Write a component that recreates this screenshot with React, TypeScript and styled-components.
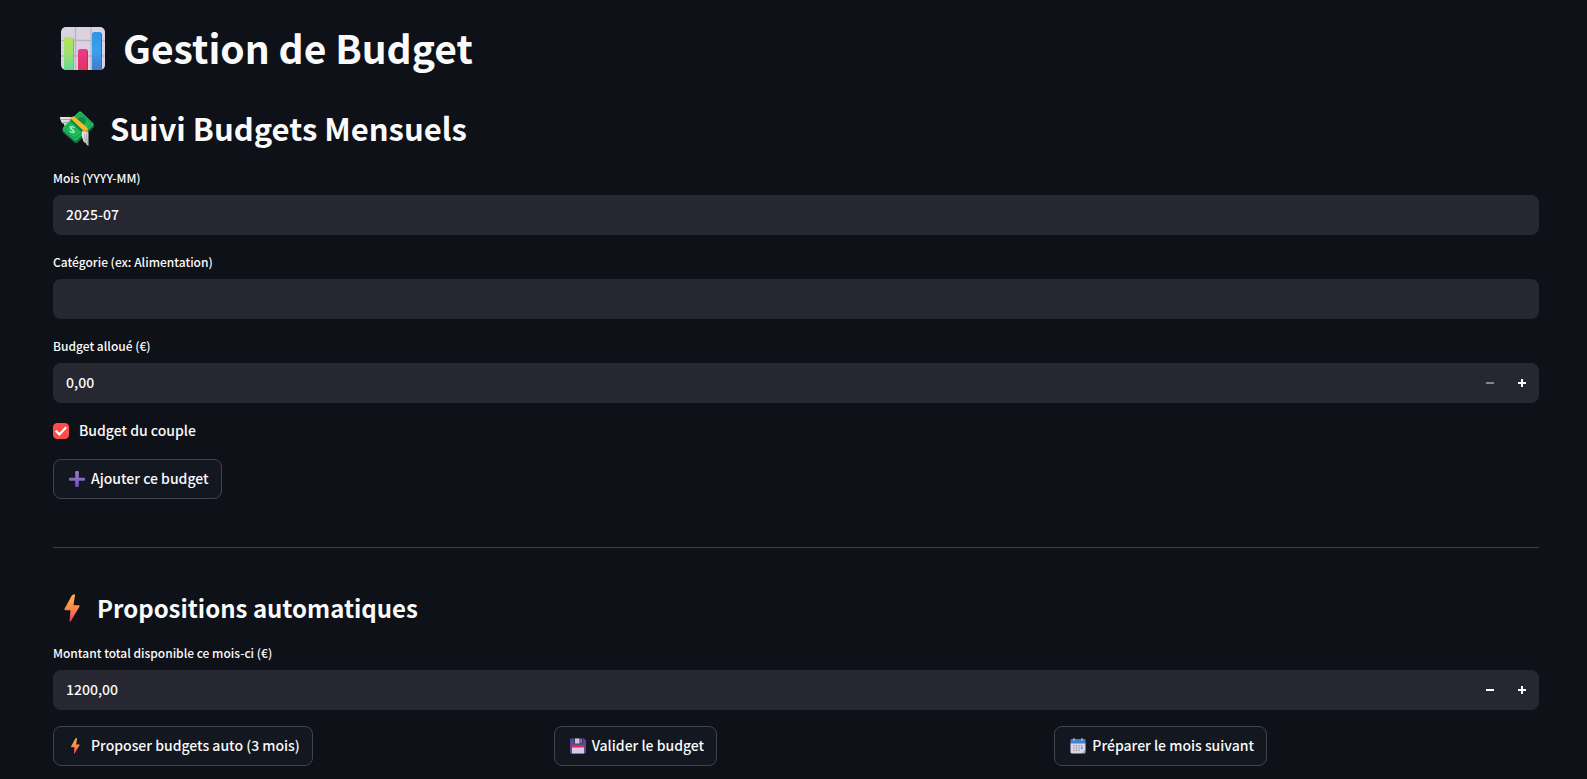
import React, { useState } from "react";
import styled, { createGlobalStyle } from "styled-components";

const GlobalStyle = createGlobalStyle`
  *, *::before, *::after { box-sizing: border-box; }
  body {
    margin: 0;
    background: #0e1117;
    color: #fafafa;
    font-family: "Source Sans Pro", "Noto Sans CJK SC", sans-serif;
    font-size: 14px;
    font-weight: 500;
    line-height: 24px;
  }
`;

const Page = styled.main`
  display: flex;
  flex-direction: column;
  gap: 16px;
  padding: 21px 48px 13px 53px;
`;

const Title = styled.h1`
  display: flex;
  align-items: center;
  gap: 18px;
  margin: 0 0 18px;
  padding-left: 8px;
  font-size: 39px;
  font-weight: 700;
  line-height: 52px;

  > svg { margin-top: 4px; }
`;

const Section = styled.h2`
  display: flex;
  align-items: center;
  gap: 16px;
  margin: 0;
  padding: 0 0 2px 7px;
  font-size: 31px;
  font-weight: 600;
  line-height: 42px;
`;

const SubSection = styled.h3`
  display: flex;
  align-items: center;
  gap: 8px;
  margin: 0;
  padding: 0 0 2px 8px;
  font-size: 24px;
  font-weight: 600;
  line-height: 32px;
`;

const Field = styled.div`
  display: flex;
  flex-direction: column;
  gap: 6px;
`;

const FieldLabel = styled.label`
  font-size: 12px;
  line-height: 22px;
`;

const InputShell = styled.div`
  display: flex;
  height: 40px;
  padding-right: 1px;
  overflow: hidden;
  border-radius: 8px;
  background: #262730;
`;

const TextInput = styled.input`
  flex: 1;
  min-width: 0;
  padding: 0 13px 2px;
  border: 0;
  outline: 0;
  background: transparent;
  color: #fafafa;
  font: inherit;
`;

const StepButton = styled.button`
  display: flex;
  align-items: center;
  justify-content: center;
  width: 32px;
  padding: 0;
  border: 0;
  background: transparent;
  color: #fafafa;
  cursor: pointer;

  &:disabled {
    color: #808495;
    cursor: default;
  }
`;

const CheckLabel = styled.label`
  display: flex;
  align-items: center;
  align-self: flex-start;
  gap: 10px;
  height: 24px;
  line-height: 22px;
  cursor: pointer;
`;

const LabelText = styled.span`
  padding-bottom: 2px;
`;

const CheckBox = styled.span`
  display: grid;
  width: 16px;
  height: 16px;

  > * { grid-area: 1 / 1; }
  > svg { pointer-events: none; }
`;

const CheckInput = styled.input`
  appearance: none;
  width: 16px;
  height: 16px;
  margin: 0;
  border: 1px solid #41444c;
  border-radius: 4px;

  &:checked {
    border-color: #ff4b4b;
    background: #ff4b4b;
  }
`;

const ActionButton = styled.button`
  display: inline-flex;
  align-items: center;
  align-self: flex-start;
  gap: 6px;
  height: 40px;
  padding: 0 12px 0 15px;
  border: 1px solid #41444c;
  border-radius: 8px;
  background: #131720;
  color: #fafafa;
  font: inherit;
  white-space: nowrap;
  cursor: pointer;
`;

const Divider = styled.hr`
  width: 100%;
  height: 1px;
  margin: 32px 0 28px;
  border: 0;
  background: #3d4045;
`;

const Columns = styled.div`
  display: grid;
  grid-template-columns: repeat(3, 1fr);
  gap: 16px;
`;

const ChartIcon = () => (
  <svg width="44" height="44" viewBox="0 0 44 44" aria-hidden="true">
    <defs>
      <linearGradient id="chartBg" x1="0" y1="0" x2="1" y2="1">
        <stop offset="0" stopColor="#d9d3df" />
        <stop offset="1" stopColor="#ddd0e6" />
      </linearGradient>
      <linearGradient id="chartGreen" x1="0" y1="0" x2="0" y2="1">
        <stop offset="0" stopColor="#b2e35c" />
        <stop offset=".5" stopColor="#a0e070" />
        <stop offset="1" stopColor="#5fda92" />
      </linearGradient>
      <linearGradient id="chartPink" x1="0" y1="0" x2="0" y2="1">
        <stop offset="0" stopColor="#ea3b8c" />
        <stop offset="1" stopColor="#e0345e" />
      </linearGradient>
      <linearGradient id="chartBlue" x1="0" y1="0" x2="0" y2="1">
        <stop offset="0" stopColor="#2c93e8" />
        <stop offset=".5" stopColor="#3d9ff0" />
        <stop offset="1" stopColor="#417bc9" />
      </linearGradient>
      <clipPath id="chartClip"><rect width="44" height="43" rx="5" /></clipPath>
    </defs>
    <g clipPath="url(#chartClip)">
      <rect width="44" height="43" fill="url(#chartBg)" />
      <path d="M14.500 0v43M30 0v43M0 13.500h44M0 29h44" stroke="#bab4c1" strokeWidth="1.300" />
      <path d="M3 43V12.500Q3 10 5.500 10h5Q13 10 13 12.500V43z" fill="url(#chartGreen)" />
      <path d="M17 43V24.500Q17 22 19.500 22h5Q27 22 27 24.500V43z" fill="url(#chartPink)" />
      <path d="M31 43V7.500Q31 5 33.500 5h5Q41 5 41 7.500V43z" fill="url(#chartBlue)" />
      <path d="M12.500 12v31" stroke="#83bd56" strokeWidth="1" />
      <path d="M26.500 24v19" stroke="#c02f62" strokeWidth="1" />
      <path d="M40.500 7v36" stroke="#2b70bd" strokeWidth="1" />
    </g>
  </svg>
);

const MoneyIcon = () => (
  <svg width="34" height="36" viewBox="0 0 34 36" aria-hidden="true">
    <defs>
      <linearGradient id="wing" x1="0" y1="0" x2="1" y2="1">
        <stop offset="0" stopColor="#f3f0f0" />
        <stop offset="1" stopColor="#b7b0b2" />
      </linearGradient>
    </defs>
    <path d="M0 7l11 0 5 6-9 5q-3-1-3-4-3-1-3-3Q0 9 0 7z" fill="url(#wing)" />
    <path d="M1 9.500h10M3 12.500h7" stroke="#9b9597" strokeWidth=".8" />
    <path d="M2.500 20.500L20 3.500l14 10.500v3L17.500 32.500q-1.500 1-3 0L2.500 22z" fill="#16733e" />
    <path d="M3 17.500L18.500 2q1.500-1.500 3 0l11.500 11q1 1.200 0 2.500L17 30q-1.500 1-3 0L3 20.500q-1-1.500 0-3z" fill="#20b95b" />
    <path d="M5.500 18.800L19.800 4.500q1.500 1 2.500.300l8 8q-.8 1 .2 2L16 27.700q-1.200-.8-2.200 0L5.500 20.500z" fill="none" stroke="#159348" strokeWidth=".9" />
    <circle cx="21.500" cy="11" r="4.300" fill="#148b45" />
    <path d="M14.500 17.800c-1.500-1.800-3.800-1.500-4.100.2-.4 1.900 3.900 1.100 3.500 3.200-.4 1.800-3 1.700-4.200-.2M9.800 16.200l4.600 6.500" fill="none" stroke="#a5efc0" strokeWidth="1.300" />
    <path d="M10.500 8.500L25.500 21.500l0 2-4-1L10.500 11z" fill="#17853f" />
    <path d="M10.300 8.300Q11.500 6.500 13.800 6.200L28 18.300v4.200l-3.300-.7z" fill="#fdb92b" />
    <path d="M26 19.500l2-1.200v4.200l-3.300-.7z" fill="#e79a22" />
    <path d="M22 21l6.500 1.500V36q-2.300-.5-2.700-3-3-.8-3-4-1.300-2-.8-8z" fill="url(#wing)" />
    <path d="M24.300 23.500q0 5 1.500 8M26.500 23.500q-.2 5 1 10" fill="none" stroke="#a49d9f" strokeWidth=".7" />
  </svg>
);

const BoltIcon = ({ size, id }: { size: number; id: string }) => (
  <svg width={size} height={size} viewBox="0 0 28 28" aria-hidden="true">
    <defs>
      <linearGradient id={id} x1="0" y1="0" x2="0" y2="1">
        <stop offset="0" stopColor="#fdb542" />
        <stop offset=".5" stopColor="#fb8b48" />
        <stop offset="1" stopColor="#e9405f" />
      </linearGradient>
    </defs>
    <path
      d="M12.700.6L13.300.2Q14.300.2 14 1.200L12.500 11.300H18Q19.100 11.500 18.400 12.700L9.800 27.200Q9 28 8.600 26.800L9.400 16.300H4.200Q3 16 3.500 14.800L10.500 2Q11.200.8 12.700.6z"
      fill={`url(#${id})`}
    />
  </svg>
);

const PlusEmoji = () => (
  <svg width="16" height="16" viewBox="0 0 16 16" aria-hidden="true">
    <defs>
      <linearGradient id="plusFill" x1="0" y1="0" x2="0" y2="1">
        <stop offset="0" stopColor="#9184c2" />
        <stop offset=".5" stopColor="#8469c0" />
        <stop offset="1" stopColor="#7949c9" />
      </linearGradient>
    </defs>
    <path d="M6.200 1Q6.200 0 7.200 0h1.600q1 0 1 1v5.700H15q1 0 1 1v1.100q0 1-1 1H9.800V15q0 1-1 1H7.200q-1 0-1-1V9.800H1q-1 0-1-1V7.700q0-1 1-1h5.200z" fill="url(#plusFill)" />
  </svg>
);

const DiskIcon = () => (
  <svg width="16" height="16" viewBox="0 0 16 16" aria-hidden="true">
    <defs>
      <linearGradient id="diskLabel" x1="0" y1="0" x2="0" y2="1">
        <stop offset="0" stopColor="#e2c8e9" />
        <stop offset="1" stopColor="#d5c7ec" />
      </linearGradient>
    </defs>
    <path d="M1 .5h13l2 2V14.500q0 1-1 1H1q-1 0-1-1v-13q0-1 1-1z" fill="#5b4a93" />
    <path d="M4 .5h9v5H4z" fill="#3b3353" />
    <path d="M5 .5h4.500v5H5z" fill="#cdc4d8" />
    <path d="M10.200 1h1.800v4h-1.800z" fill="#817895" />
    <path d="M2 7.500h12v2H2z" fill="#e5304d" />
    <path d="M2 9.500h12v6H2z" fill="url(#diskLabel)" />
  </svg>
);

const CalendarIcon = () => (
  <svg width="16" height="16" viewBox="0 0 16 16" aria-hidden="true">
    <path d="M.5 5h15v7l-3.500 3.500H2Q.5 15.500.5 14z" fill="#ded5e9" />
    <path d="M15.500 12v2q0 1.500-1.500 1.500h-2z" fill="#c3b4d7" />
    <path d="M1.500 1h13q1 0 1 1v3.500H.5V2q0-1 1-1z" fill="#3b83d3" />
    <path d="M4 0v3M12 0v3" stroke="#b5bdd2" strokeWidth="1.200" />
    <path d="M4 7v6M6.500 7v6M9 7v6M11.500 7v4" stroke="#9690a5" strokeWidth="1.200" strokeDasharray="1.300 1" />
    <path d="M11 8.500h1.700v2.500H11z" fill="#5ba0e9" />
  </svg>
);

const MinusGlyph = () => (
  <svg width="8" height="8" viewBox="0 0 8 8" fill="currentColor" shapeRendering="crispEdges" aria-hidden="true">
    <path d="M0 3h8v2H0z" />
  </svg>
);

const PlusGlyph = () => (
  <svg width="8" height="8" viewBox="0 0 8 8" fill="currentColor" shapeRendering="crispEdges" aria-hidden="true">
    <path d="M3 0h2v3h3v2H5v3H3V5H0V3h3z" />
  </svg>
);

const CheckGlyph = () => (
  <svg width="16" height="16" viewBox="0 0 16 16" fill="none" aria-hidden="true">
    <path d="M2.700 7.800L6.400 11.400L13.200 4.300" stroke="#fff" strokeWidth="2.200" />
  </svg>
);

const format = (n: number) => n.toFixed(2).replace(".", ",");
const parse = (s: string) => parseFloat(s.replace(",", ".")) || 0;

function TextField({ id, label, initial }: { id: string; label: string; initial: string }) {
  const [value, setValue] = useState(initial);
  return (
    <Field>
      <FieldLabel htmlFor={id}>{label}</FieldLabel>
      <InputShell>
        <TextInput id={id} type="text" value={value} onChange={(e) => setValue(e.target.value)} />
      </InputShell>
    </Field>
  );
}

function NumberField({ id, label, initial }: { id: string; label: string; initial: number }) {
  const [value, setValue] = useState(format(initial));
  const step = (by: number) => setValue(format(Math.max(0, parse(value) + by)));
  return (
    <Field>
      <FieldLabel htmlFor={id}>{label}</FieldLabel>
      <InputShell>
        <TextInput id={id} type="text" inputMode="decimal" value={value} onChange={(e) => setValue(e.target.value)} />
        <StepButton type="button" aria-label="Diminuer" disabled={parse(value) <= 0} onClick={() => step(-1)}>
          <MinusGlyph />
        </StepButton>
        <StepButton type="button" aria-label="Augmenter" onClick={() => step(1)}>
          <PlusGlyph />
        </StepButton>
      </InputShell>
    </Field>
  );
}

function Action({ icon, children }: { icon: React.ReactNode; children: React.ReactNode }) {
  return (
    <ActionButton type="button">
      {icon}
      <LabelText>{children}</LabelText>
    </ActionButton>
  );
}

export default function App() {
  const [couple, setCouple] = useState(true);
  return (
    <>
      <GlobalStyle />
      <Page>
        <Title><ChartIcon />Gestion de Budget</Title>
        <Section><MoneyIcon />Suivi Budgets Mensuels</Section>
        <TextField id="mois" label="Mois (YYYY-MM)" initial="2025-07" />
        <TextField id="categorie" label="Catégorie (ex: Alimentation)" initial="" />
        <NumberField id="budget" label="Budget alloué (€)" initial={0} />
        <CheckLabel>
          <CheckBox>
            <CheckInput type="checkbox" checked={couple} onChange={(e) => setCouple(e.target.checked)} />
            {couple && <CheckGlyph />}
          </CheckBox>
          <LabelText>Budget du couple</LabelText>
        </CheckLabel>
        <Action icon={<PlusEmoji />}>Ajouter ce budget</Action>
        <Divider />
        <SubSection><BoltIcon size={28} id="boltLarge" />Propositions automatiques</SubSection>
        <NumberField id="montant" label="Montant total disponible ce mois-ci (€)" initial={1200} />
        <Columns>
          <div><Action icon={<BoltIcon size={16} id="boltSmall" />}>Proposer budgets auto (3 mois)</Action></div>
          <div><Action icon={<DiskIcon />}>Valider le budget</Action></div>
          <div><Action icon={<CalendarIcon />}>Préparer le mois suivant</Action></div>
        </Columns>
      </Page>
    </>
  );
}
